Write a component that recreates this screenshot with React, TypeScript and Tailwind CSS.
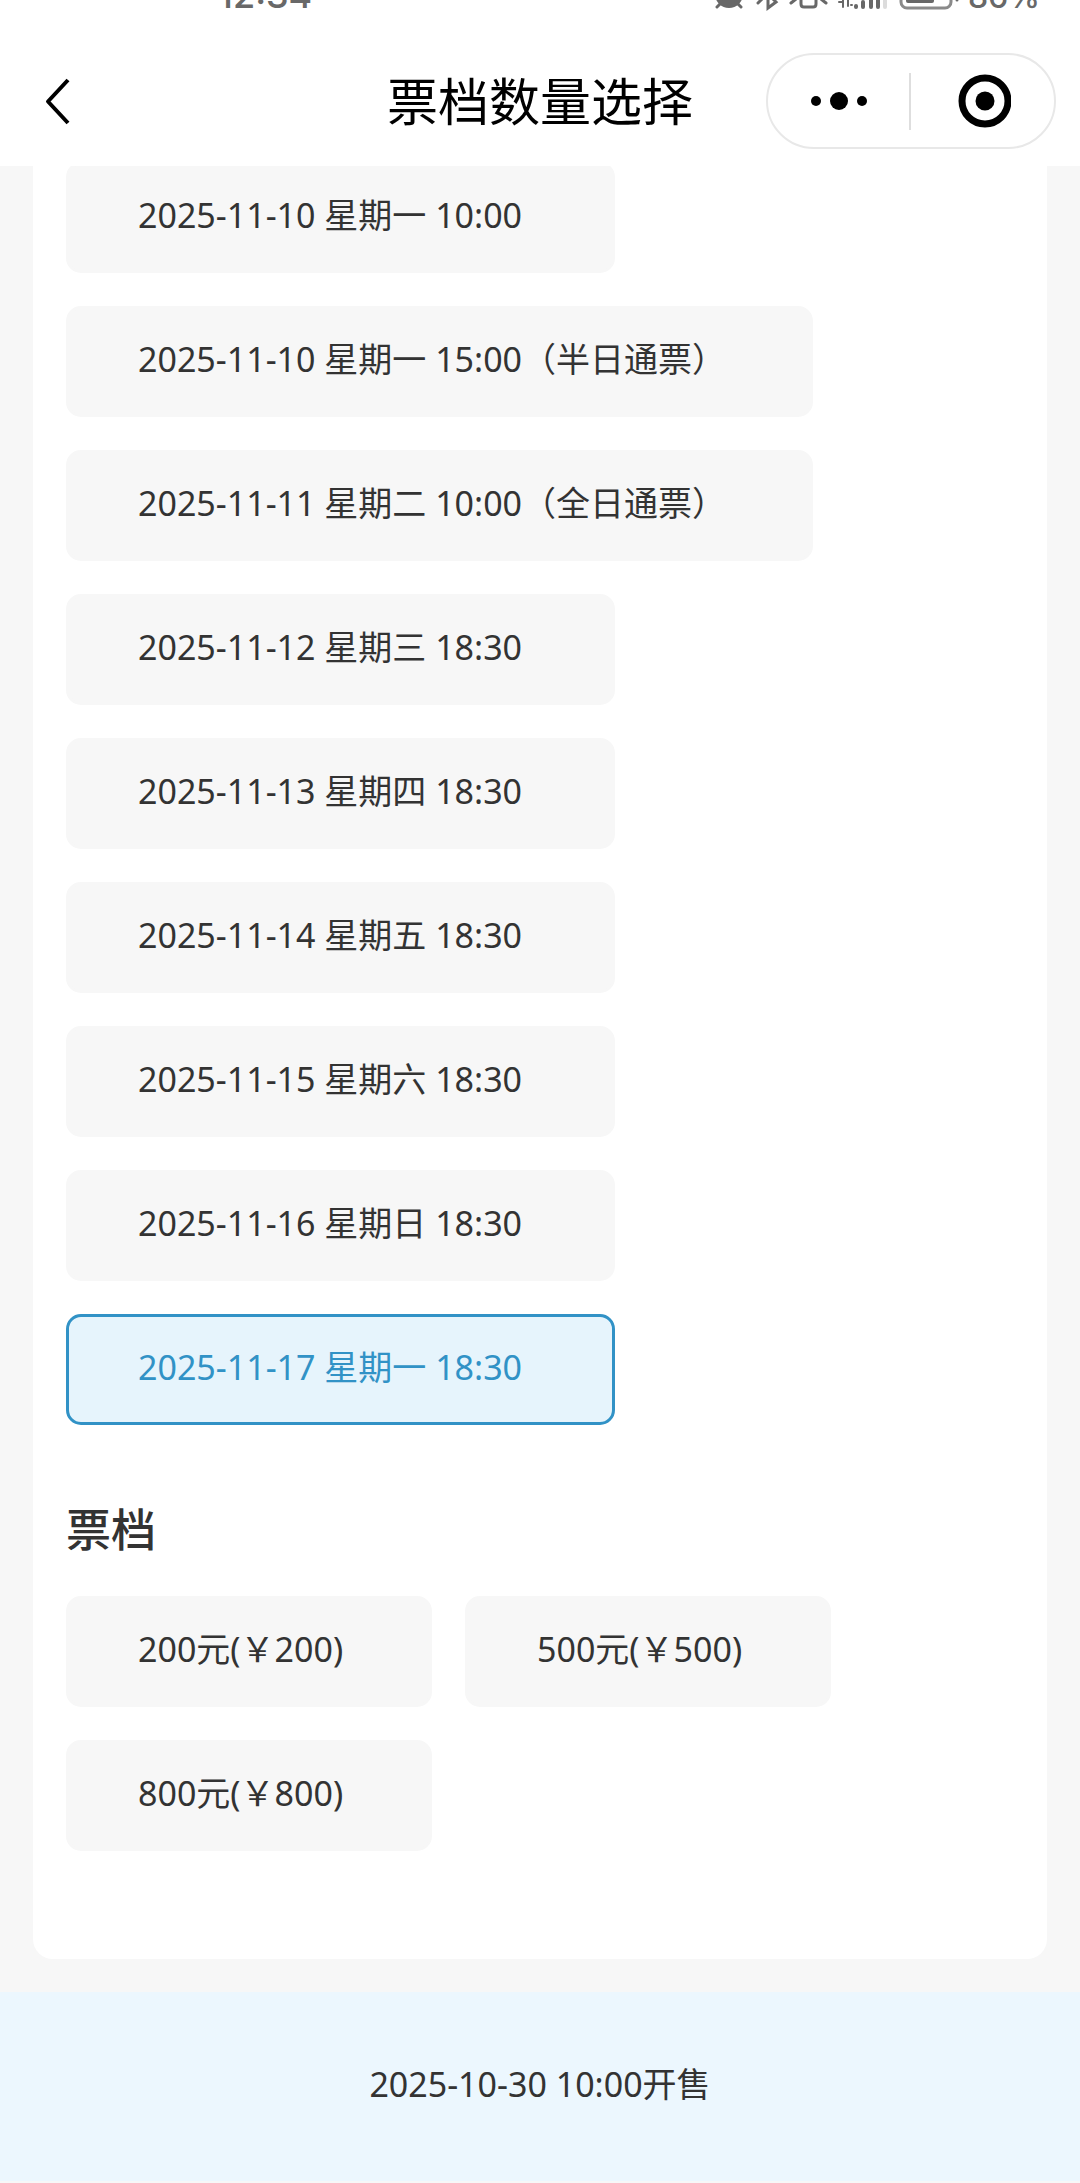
import { useState } from "react";
import clsx from "clsx";

const sessions = [
  "2025-11-10 星期一 10:00",
  "2025-11-10 星期一 15:00（半日通票）",
  "2025-11-11 星期二 10:00（全日通票）",
  "2025-11-12 星期三 18:30",
  "2025-11-13 星期四 18:30",
  "2025-11-14 星期五 18:30",
  "2025-11-15 星期六 18:30",
  "2025-11-16 星期日 18:30",
  "2025-11-17 星期一 18:30",
];

const prices = ["200元(￥200)", "500元(￥500)", "800元(￥800)"];

function StatusIcons() {
  return (
    <svg
      className="h-[13px] w-[260px] shrink-0"
      viewBox="704 0 260 13"
      fill="none"
      stroke="#686868"
      strokeWidth="3"
      strokeLinecap="round"
      aria-hidden="true"
    >
      {/* alarm */}
      <circle cx="729" cy="-6" r="14" fill="#686868" stroke="none" />
      <path d="M717 7l5-5M741 7l-5-5" />
      {/* bluetooth */}
      <path d="M758 3l5-5M768-4V8l8-6-6-6" />
      {/* vibrate */}
      <path d="M801-3V4q0 3 3 3h9q3 0 3-3V-3M791 3l5-4M826 3l-5-4" />
      {/* network */}
      <path d="M839 2h4M843-2V7M848-2V6M851 5h1" strokeWidth="2" />
      <path d="M856 6v1M863 2v5M871-3V7M878-3V7" strokeWidth="4" />
      <path d="M885-3V7" stroke="#dcdcdc" strokeWidth="4" />
      {/* battery */}
      <rect x="901" y="-14" width="50" height="22" rx="6" stroke="#8a8a8a" />
      <rect x="906" y="-10" width="28" height="13" rx="2" fill="#686868" stroke="none" />
      <path d="M957-3V0" />
    </svg>
  );
}

function Header() {
  return (
    <header className="relative z-10 flex flex-col bg-white pb-[17px]">
      <div className="flex h-[13px] items-end justify-between overflow-hidden pr-10 pl-[218px] font-['Inter',sans-serif] leading-none font-medium text-[#686868]">
        <span className="text-[36px]">12:34</span>
        <div className="flex items-end gap-1">
          <StatusIcons />
          <span className="text-[32px]">86%</span>
        </div>
      </div>

      <div className="mt-10 grid h-24 grid-cols-[1fr_auto_1fr] items-center px-6">
        <button type="button" aria-label="返回" className="justify-self-start pl-3">
          <svg className="h-12 w-10" viewBox="0 0 40 48" fill="none" stroke="#000" strokeWidth="4">
            <path d="M32 3L12 24.500L32 46" strokeLinejoin="round" />
          </svg>
        </button>
        <h1 className="text-[51px] leading-none text-black">票档数量选择</h1>
        <div className="flex h-24 w-[290px] items-center justify-self-end rounded-full border-2 border-[#e8e8e8]">
          <button type="button" aria-label="更多" className="flex flex-1 justify-center">
            <svg className="h-5 w-14" viewBox="0 0 56 20">
              <circle cx="5" cy="10" r="5" />
              <circle cx="28" cy="10" r="9" />
              <circle cx="51" cy="10" r="5" />
            </svg>
          </button>
          <span className="h-[57px] w-0.5 bg-[#dedede]" />
          <button type="button" aria-label="关闭" className="flex flex-1 justify-center pl-0.5">
            <svg className="size-[54px]" viewBox="0 0 54 54">
              <circle cx="28" cy="27" r="23" fill="none" stroke="#000" strokeWidth="7" />
              <circle cx="28" cy="27" r="9.500" />
            </svg>
          </button>
        </div>
      </div>
    </header>
  );
}

type OptionProps = {
  label: string;
  selected: boolean;
  className: string;
  onSelect: () => void;
};

function Option({ label, selected, className, onSelect }: OptionProps) {
  return (
    <button
      type="button"
      aria-pressed={selected}
      onClick={onSelect}
      className={clsx(
        "h-[111px] rounded-[15px] border-3 pb-1.5 pl-[69px] text-left text-[34px] leading-none",
        selected
          ? "border-[#3192c6] bg-[#e6f4fc] text-[#3192c6]"
          : "border-[#f7f7f7] bg-[#f7f7f7] text-[#333]",
        className,
      )}
    >
      {label}
    </button>
  );
}

export default function App() {
  const [session, setSession] = useState(sessions[8]);
  const [price, setPrice] = useState("");

  return (
    <div className="flex min-h-screen flex-col bg-[#f7f7f7] font-['Noto_Sans','Noto_Sans_CJK_SC',sans-serif]">
      <Header />

      <main className="mx-[33px] -mt-1 rounded-b-[20px] bg-white px-[33px] pb-[108px]">
        <div className="flex flex-col items-start gap-[33px]">
          {sessions.map((item) => (
            <Option
              key={item}
              label={item}
              selected={item === session}
              className="min-w-[549px] pr-[84px]"
              onSelect={() => setSession(item)}
            />
          ))}
        </div>

        <h2 className="mt-[82px] text-[45px] leading-[45px] font-medium text-[#333]">票档</h2>

        <div className="mt-11 flex flex-wrap gap-[33px]">
          {prices.map((item) => (
            <Option
              key={item}
              label={item}
              selected={item === price}
              className="min-w-[366px] pr-20"
              onSelect={() => setPrice(item)}
            />
          ))}
        </div>
      </main>

      <footer className="mt-[33px] flex h-[189px] items-center justify-center bg-[#ecf7fe] pb-1.5 text-[34px] leading-none text-[#333]">
        2025-10-30 10:00开售
      </footer>
    </div>
  );
}
